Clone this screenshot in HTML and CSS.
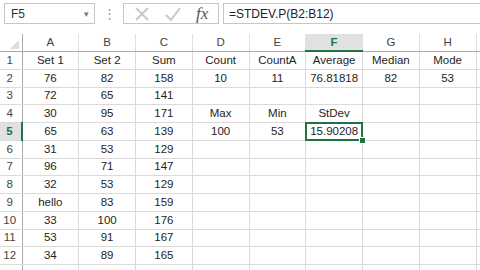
FILE: index.html
```html
<!DOCTYPE html>
<html lang="en">
<head>
    <meta charset="UTF-8">
    <title>Book1 - Excel</title>
    <link rel="stylesheet" href="styles.css">
</head>
<body>
    <div class="formula-bar">
        <div class="name-box">
            <span>F5</span>
            <span class="drop">&#9662;</span>
        </div>
        <div class="grip">&#8942;</div>
        <div class="fx-buttons">
            <svg class="cancel" width="16" height="16" viewBox="0 0 16 16"><path d="M2 2 L14 14 M14 2 L2 14" stroke="#c9c9c9" stroke-width="2" fill="none"/></svg>
            <svg class="enter" width="18" height="16" viewBox="0 0 18 16"><path d="M2 9 L7 14 L16 2" stroke="#c9c9c9" stroke-width="2" fill="none"/></svg>
            <span class="fx">fx</span>
        </div>
        <div class="formula">=STDEV.P(B2:B12)</div>
    </div>

    <table class="sheet">
        <colgroup>
            <col class="c-rh">
            <col class="c-w"><col class="c-w"><col class="c-w"><col class="c-w">
            <col class="c-w"><col class="c-w"><col class="c-w"><col class="c-w">
            <col>
        </colgroup>
        <tr class="col-heads">
            <th class="corner"><span class="tri"></span></th>
            <th>A</th><th>B</th><th>C</th><th>D</th><th>E</th><th class="sel">F</th><th>G</th><th>H</th><th></th>
        </tr>
        <tr><th>1</th><td>Set 1</td><td>Set 2</td><td>Sum</td><td>Count</td><td>CountA</td><td>Average</td><td>Median</td><td>Mode</td><td></td></tr>
        <tr><th>2</th><td>76</td><td>82</td><td>158</td><td>10</td><td>11</td><td>76.81818</td><td>82</td><td>53</td><td></td></tr>
        <tr><th>3</th><td>72</td><td>65</td><td>141</td><td></td><td></td><td></td><td></td><td></td><td></td></tr>
        <tr><th>4</th><td>30</td><td>95</td><td>171</td><td>Max</td><td>Min</td><td>StDev</td><td></td><td></td><td></td></tr>
        <tr><th class="sel">5</th><td>65</td><td>63</td><td>139</td><td>100</td><td>53</td><td class="active">15.90208</td><td></td><td></td><td></td></tr>
        <tr><th>6</th><td>31</td><td>53</td><td>129</td><td></td><td></td><td></td><td></td><td></td><td></td></tr>
        <tr><th>7</th><td>96</td><td>71</td><td>147</td><td></td><td></td><td></td><td></td><td></td><td></td></tr>
        <tr><th>8</th><td>32</td><td>53</td><td>129</td><td></td><td></td><td></td><td></td><td></td><td></td></tr>
        <tr><th>9</th><td>hello</td><td>83</td><td>159</td><td></td><td></td><td></td><td></td><td></td><td></td></tr>
        <tr><th>10</th><td>33</td><td>100</td><td>176</td><td></td><td></td><td></td><td></td><td></td><td></td></tr>
        <tr><th>11</th><td>53</td><td>91</td><td>167</td><td></td><td></td><td></td><td></td><td></td><td></td></tr>
        <tr><th>12</th><td>34</td><td>89</td><td>165</td><td></td><td></td><td></td><td></td><td></td><td></td></tr>
        <tr><th></th><td></td><td></td><td></td><td></td><td></td><td></td><td></td><td></td><td></td></tr>
    </table>
</body>
</html>
```

FILE: styles.css
```css
body {
    margin: 0;
    background: #fff;
    font-family: "Liberation Sans", Arial, sans-serif;
    font-size: 11.5px;
    color: #1e1e1e;
    overflow: hidden;
}

/* formula bar */
.formula-bar {
    display: flex;
    align-items: center;
    height: 21px;
    padding: 3px 0 0 4px;
}
.name-box {
    display: flex;
    align-items: center;
    justify-content: space-between;
    box-sizing: border-box;
    width: 91px;
    height: 21px;
    border: 1px solid #c6c6c6;
    padding: 0 5px 0 6px;
    font-size: 12px;
    color: #333;
}
.name-box .drop {
    font-size: 9px;
    color: #777;
}
.grip {
    width: 28px;
    text-align: center;
    color: #a0a0a0;
    font-size: 13px;
}
.fx-buttons {
    display: flex;
    align-items: center;
    box-sizing: border-box;
    width: 96px;
    height: 21px;
    border: 1px solid #c6c6c6;
    padding: 0 0 0 10px;
}
.fx-buttons .enter {
    margin-left: 14px;
}
.fx-buttons .fx {
    margin-left: 14px;
    font-family: "Liberation Serif", "Times New Roman", serif;
    font-style: italic;
    font-size: 17px;
    color: #555;
}
.formula {
    flex: 1;
    box-sizing: border-box;
    height: 21px;
    margin-left: 4px;
    border: 1px solid #c6c6c6;
    border-right: none;
    padding: 3px 0 0 5px;
    font-size: 12px;
    color: #222;
}

/* grid */
.sheet {
    margin-top: 10px;
    border-collapse: collapse;
    table-layout: fixed;
    width: 490px;
}
.c-rh { width: 22px; }
.c-w { width: 56.75px; }

.sheet td,
.sheet th {
    height: 16.75px;
    padding: 0;
    border-right: 1px solid #dadada;
    border-bottom: 1px solid #dadada;
    text-align: center;
    white-space: nowrap;
    overflow: visible;
    line-height: 15px;
}
.sheet th {
    font-weight: normal;
    color: #444;
}
.sheet tr th:first-child {
    border-right: 1px solid #ababab;
    padding-right: 2px;
    text-align: center;
}
.col-heads th {
    height: 16px;
    border-bottom: 1px solid #ababab;
    border-right: 1px solid #e0e0e0;
}
.corner {
    position: relative;
}
.tri {
    position: absolute;
    right: 3px;
    bottom: 2px;
    width: 0;
    height: 0;
    border-left: 9px solid transparent;
    border-bottom: 9px solid #dcdcdc;
}
.sheet th.sel {
    background: #e1e1e1;
    color: #217346;
    font-weight: bold;
}
.col-heads th.sel {
    border-bottom: 2px solid #217346;
}
.sheet tr th.sel:first-child {
    border-right: 2px solid #217346;
}

.active {
    position: relative;
}
.active::before {
    content: "";
    position: absolute;
    left: -1px;
    top: -1px;
    right: -1px;
    bottom: -1px;
    border: 2px solid #217346;
}
.active::after {
    content: "";
    position: absolute;
    right: -4px;
    bottom: -4px;
    width: 5px;
    height: 5px;
    background: #217346;
    border: 1px solid #fff;
}
```
